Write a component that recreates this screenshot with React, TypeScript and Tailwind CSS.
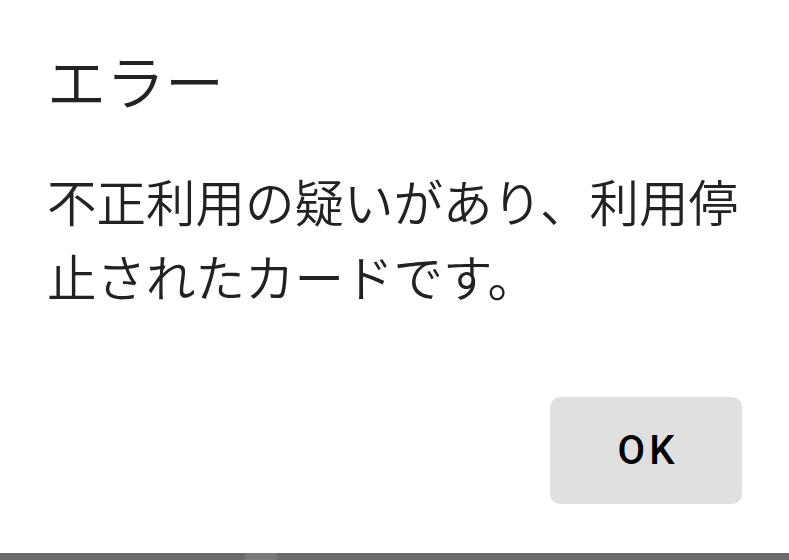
import React from "react"

const jp = { fontFamily: '"Noto Sans CJK JP", "Noto Sans", sans-serif' }

const ErrorDialog = () => {
  return (
    <div className="flex h-[560px] w-[789px] flex-col bg-white" style={jp}>
      <div className="flex flex-1 flex-col px-[47px]">
        <h2 className="mt-[44px] text-[59px] leading-[72px] font-[350] text-[#222222]">エラー</h2>
        <p className="mt-[47px] text-[49.5px] leading-[75px] font-[350] text-[#222222]">
          不正利用の疑いがあり、利用停止されたカードです。
        </p>
        <div className="mt-auto mb-[49px] flex justify-end">
          <button className="flex h-[107px] w-[192px] items-center justify-center rounded-[10px] bg-[#e0e0e0] pl-[4px] font-['Roboto'] text-[40px] font-medium tracking-[4px] text-black">
            OK
          </button>
        </div>
      </div>
      <div className="flex h-[7px] w-full bg-[#6b6b6b]">
        <div className="ml-[245px] w-[32px] bg-[#7a7a7a]" />
      </div>
    </div>
  )
}

export default function App() {
  return <ErrorDialog />
}
